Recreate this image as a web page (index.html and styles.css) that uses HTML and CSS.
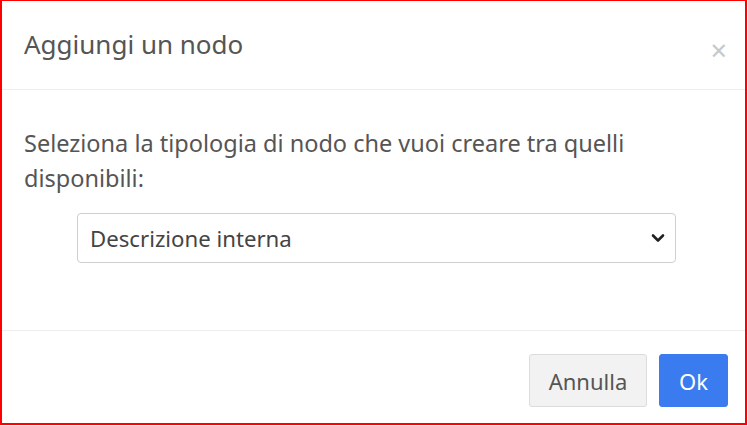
FILE: index.html
```html
<!DOCTYPE html>
<html lang="it">
<head>
<meta charset="utf-8">
<link rel="stylesheet" href="styles.css">
</head>
<body>
<div class="frame">
  <div class="modal-header">
    <h4 class="modal-title">Aggiungi un nodo</h4>
    <span class="close">&times;</span>
  </div>
  <div class="modal-body">
    <p class="intro">Seleziona la tipologia di nodo che vuoi creare tra quelli disponibili:</p>
    <div class="select">
      <span>Descrizione interna</span>
      <svg class="chev" width="14" height="10" viewBox="0 0 14 10"><path d="M2 2.5 L7 7.5 L12 2.5" fill="none" stroke="#222" stroke-width="2.6" stroke-linecap="round" stroke-linejoin="round"/></svg>
    </div>
  </div>
  <div class="modal-footer">
    <button class="btn btn-default">Annulla</button>
    <button class="btn btn-primary">Ok</button>
  </div>
</div>
</body>
</html>
```
FILE: styles.css
```css
html, body { margin: 0; padding: 0; }
body {
  width: 748px;
  height: 426px;
  background: #fff;
  font-family: "Noto Sans", "Open Sans", sans-serif;
  color: #555;
}
.frame {
  box-sizing: border-box;
  width: 747px;
  height: 425px;
  border-top: 1px solid #f00;
  border-left: 2px solid #f00;
  border-right: 2px solid #f00;
  border-bottom: 2px solid #f00;
  display: flex;
  flex-direction: column;
}
.modal-header {
  height: 89px;
  box-sizing: border-box;
  border-bottom: 1px solid #eeeeee;
  display: flex;
  align-items: center;
  justify-content: space-between;
  padding: 0 18px 0 22px;
}
.modal-title {
  margin: 0;
  font-size: 26px;
  font-weight: 400;
  color: #555;
  padding-bottom: 2px;
}
.close {
  font-size: 29px;
  color: #c8c8c8;
  line-height: 1;
  margin-top: 8px;
}
.modal-body {
  height: 241px;
  box-sizing: border-box;
  border-bottom: 1px solid #eeeeee;
  padding: 36px 22px 0 22px;
}
.intro {
  margin: 0;
  font-size: 23.5px;
  line-height: 35px;
  color: #555;
}
.select {
  box-sizing: border-box;
  margin: 17px 0 0 53px;
  width: 599px;
  height: 50px;
  border: 1px solid #cfcfcf;
  border-radius: 4px;
  display: flex;
  align-items: center;
  justify-content: space-between;
  padding: 0 10px 0 12px;
  font-size: 22.2px;
  color: #444;
}
.chev { display: block; }
.modal-footer {
  flex: 1;
  display: flex;
  justify-content: flex-end;
  align-items: flex-start;
  gap: 12px;
  padding: 23px 17px 0 0;
}
.btn {
  font-family: "Noto Sans", "Open Sans", sans-serif;
  font-size: 22px;
  height: 53px;
  border-radius: 3px;
  padding: 0;
  cursor: pointer;
}
.btn-default {
  width: 118px;
  background: #f2f2f2;
  border: 1px solid #dcdcdc;
  color: #555;
}
.btn-primary {
  width: 69px;
  background: #3b7bf0;
  border: 1px solid #3b7bf0;
  color: #fff;
}
```
